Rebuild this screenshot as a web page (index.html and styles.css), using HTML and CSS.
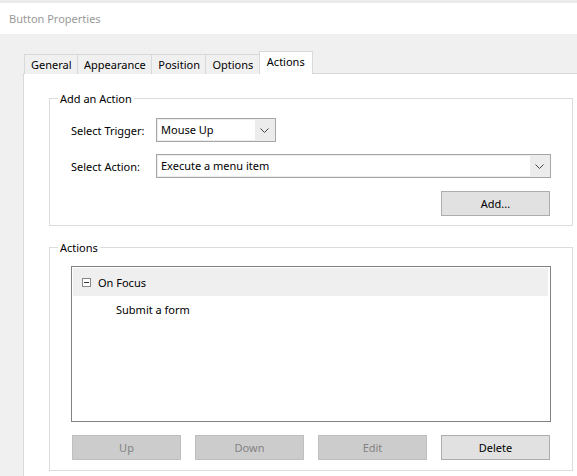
FILE: index.html
```html
<!DOCTYPE html>
<html>
<head>
<meta charset="utf-8">
<link rel="stylesheet" href="styles.css">
</head>
<body>
<div class="window">
  <div class="topstrip"></div>
  <div class="titlebar">Button Properties</div>
  <div class="dialog">
    <div class="tabs">
      <div class="tab">General</div>
      <div class="tab">Appearance</div>
      <div class="tab">Position</div>
      <div class="tab">Options</div>
      <div class="tab selected">Actions</div>
    </div>
    <div class="pane">
      <fieldset class="group group-add">
        <legend>Add an Action</legend>
        <div class="row row-trigger">
          <span class="label">Select Trigger:</span>
          <div class="combo combo-trigger">
            <span class="combo-field">Mouse Up</span>
            <span class="combo-arrow"><svg width="9" height="5" viewBox="0 0 9 5"><polyline points="0.5,0.5 4.5,4.5 8.5,0.5" fill="none" stroke="#444" stroke-width="1"/></svg></span>
          </div>
        </div>
        <div class="row row-action">
          <span class="label">Select Action:</span>
          <div class="combo combo-action">
            <span class="combo-field">Execute a menu item</span>
            <span class="combo-arrow"><svg width="9" height="5" viewBox="0 0 9 5"><polyline points="0.5,0.5 4.5,4.5 8.5,0.5" fill="none" stroke="#444" stroke-width="1"/></svg></span>
          </div>
        </div>
        <div class="row row-add">
          <button class="btn">Add...</button>
        </div>
      </fieldset>
      <fieldset class="group group-actions">
        <legend>Actions</legend>
        <div class="list">
          <div class="list-header">
            <span class="minus"><svg width="9" height="9" viewBox="0 0 9 9"><rect x="0.5" y="0.5" width="8" height="8" fill="#fff" stroke="#888"/><line x1="2" y1="4.5" x2="7" y2="4.5" stroke="#333"/></svg></span>
            <span>On Focus</span>
          </div>
          <div class="list-item">Submit a form</div>
        </div>
        <div class="buttons">
          <button class="btn disabled">Up</button>
          <button class="btn disabled">Down</button>
          <button class="btn disabled">Edit</button>
          <button class="btn">Delete</button>
        </div>
      </fieldset>
    </div>
  </div>
</div>
</body>
</html>
```
FILE: styles.css
```css
html, body {
  margin: 0;
  padding: 0;
}
body {
  width: 577px;
  height: 476px;
  overflow: hidden;
  background: #f0f0f0;
  font-family: "Noto Sans", "Open Sans", sans-serif;
  font-size: 11px;
  color: #000;
}
.window {
  width: 577px;
  height: 476px;
  display: flex;
  flex-direction: column;
}
.topstrip {
  height: 3px;
  background: #ebebeb;
}
.titlebar {
  height: 31px;
  background: #fff;
  color: #999;
  padding-left: 9px;
  line-height: 32px;
  box-sizing: border-box;
}
.dialog {
  flex: 1;
  background: #f0f0f0;
  padding: 17px 0 0 23px;
  display: flex;
  flex-direction: column;
}
.tabs {
  display: flex;
  align-items: flex-end;
  padding-left: 1px;
  height: 23px;
  position: relative;
  z-index: 1;
  margin-bottom: -1px;
}
.tab {
  height: 20px;
  line-height: 20px;
  box-sizing: border-box;
  padding: 0 5.5px 0 6px;
  border: 1px solid #d9d9d9;
  border-bottom: none;
  border-right: none;
  background: #f0f0f0;
}
.tab.selected {
  height: 23px;
  line-height: 20px;
  background: #fff;
  border: 1px solid #d9d9d9;
  border-bottom: none;
  padding: 0 7px;
}
.pane {
  flex: 1;
  background: #fff;
  border-top: 1px solid #d9d9d9;
  border-left: 1px solid #d9d9d9;
  padding: 16px 0 0 25px;
  display: flex;
  flex-direction: column;
}
.group {
  margin: 0;
  width: 524px;
  box-sizing: border-box;
  border: 1px solid #dcdcdc;
  padding: 0;
}
.group legend {
  padding: 0 2px;
  margin-left: -13px;
  line-height: 17px;
}
.group-add {
  height: 136px;
  padding: 11px 0 0 21px;
}
.group-actions {
  margin-top: 13px;
  height: 232px;
  padding: 10px 0 0 21px;
}
.row {
  display: flex;
  align-items: center;
}
.row-action {
  margin-top: 12px;
}
.row-add {
  margin-top: 13px;
  justify-content: flex-end;
  width: 479px;
}
.label {
  width: 85px;
}
.combo {
  height: 24px;
  box-sizing: border-box;
  border: 1px solid #a6a6a6;
  background: #ececec;
  display: flex;
  padding: 1px;
}
.combo-trigger {
  width: 120px;
}
.combo-action {
  width: 395px;
}
.combo-field {
  flex: 1;
  background: #fff;
  padding-left: 3px;
  line-height: 20px;
}
.combo-arrow {
  width: 19px;
  display: flex;
  align-items: center;
  justify-content: center;
}
.btn {
  font-family: inherit;
  font-size: 11px;
  height: 25px;
  width: 109px;
  box-sizing: border-box;
  border: 1px solid #adadad;
  background: #e1e1e1;
  color: #000;
  padding: 0;
  margin: 0;
}
.btn.disabled {
  background: #cccccc;
  border-color: #bfbfbf;
  color: #838383;
}
.list {
  width: 480px;
  height: 156px;
  box-sizing: border-box;
  border: 1px solid #828282;
  padding: 1px 2px 0 1px;
}
.list-header {
  height: 28px;
  background: #efefef;
  display: flex;
  align-items: center;
  padding-left: 9px;
}
.minus {
  display: flex;
  width: 16px;
}
.list-item {
  padding-left: 43px;
  line-height: 28px;
}
.buttons {
  margin-top: 13px;
  width: 478px;
  display: flex;
  justify-content: space-between;
  padding-left: 1px;
}
```
